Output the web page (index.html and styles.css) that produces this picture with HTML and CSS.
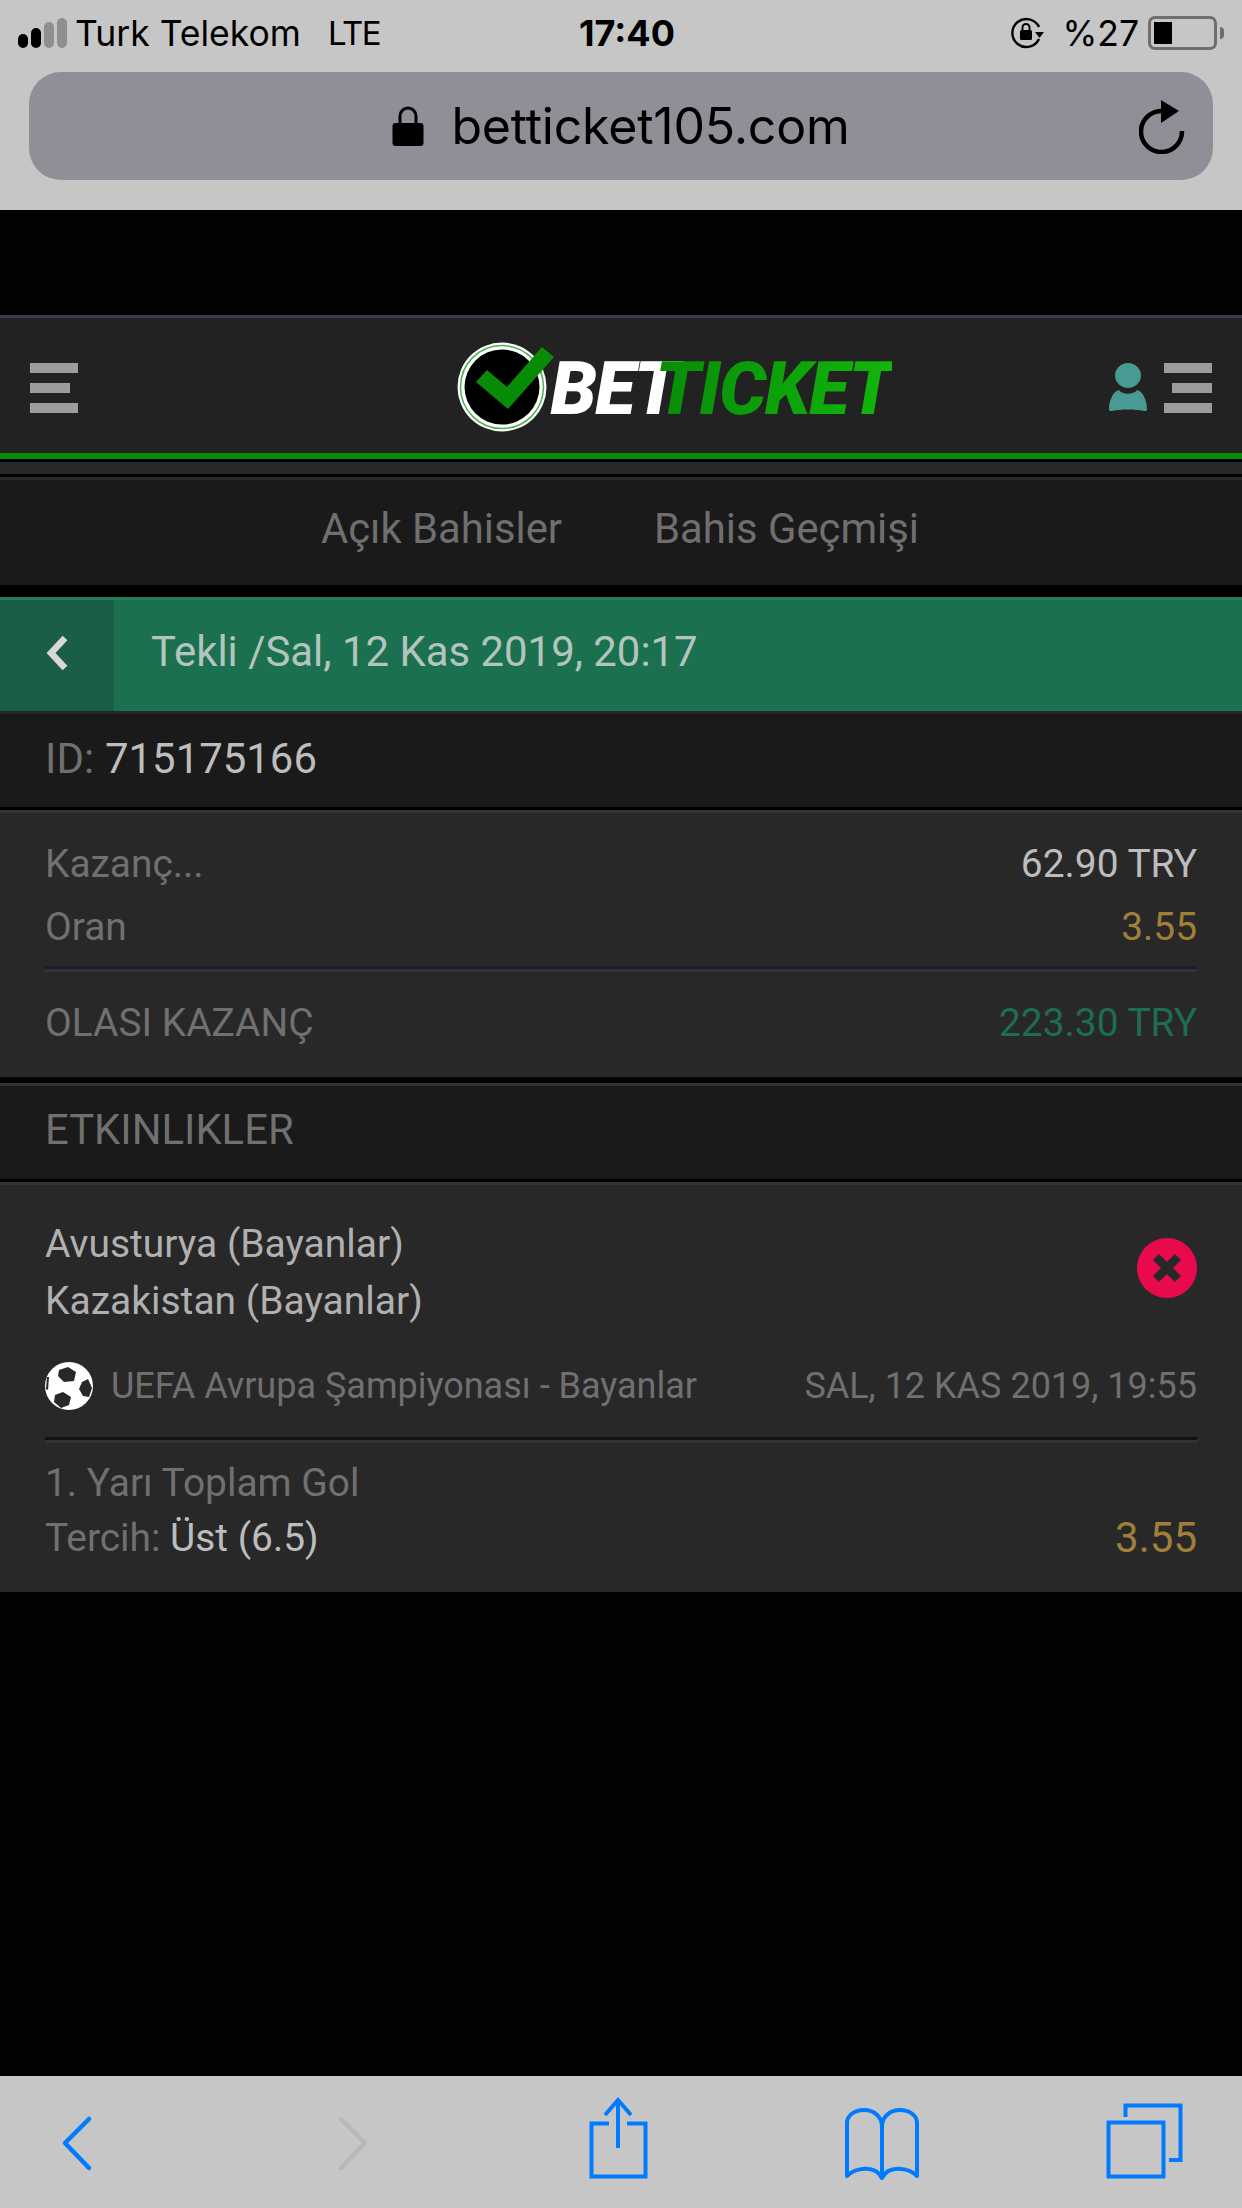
FILE: index.html
```html
<!DOCTYPE html>
<html lang="tr">
<head>
  <meta charset="utf-8">
  <title>Betticket</title>
  <link rel="stylesheet" href="styles.css">
</head>
<body>
  <div class="phone">
    <div class="browser-top">
      <div class="status">
        <div class="status-left">
          <span class="signal"><i class="on"></i><i class="on"></i><i></i><i></i></span>
          <span class="carrier">Turk Telekom</span>
          <span class="net">LTE</span>
        </div>
        <div class="clock">17:40</div>
        <div class="status-right">
          <svg class="rot" viewBox="0 0 36 32" width="36" height="32">
            <path d="M29 10A14 14 0 1 0 29 22" fill="none" stroke="#000" stroke-width="2.4"/>
            <path d="M25 15h9l-4.500 6z" fill="#000"/>
            <rect x="10" y="13" width="12" height="10" rx="1.500" fill="#000"/>
            <path d="M12.500 13v-2.500a3.500 3.500 0 0 1 7 0V13" fill="none" stroke="#000" stroke-width="2"/>
          </svg>
          <span class="percent">%27</span>
          <span class="battery"><i></i></span>
          <span class="battery-tip"></span>
        </div>
      </div>
      <div class="urlbar">
        <svg class="lock" viewBox="0 0 32 40" width="32" height="40">
          <rect x="0.500" y="17" width="31" height="23" rx="3" fill="#000"/>
          <path d="M8 18V10a8 8 0 0 1 16 0v8" fill="none" stroke="#000" stroke-width="3"/>
        </svg>
        <span class="url">betticket105.com</span>
        <svg class="reload" viewBox="0 0 46 54" width="46" height="54">
          <path d="M43 31A20.500 20.500 0 1 1 22 11" fill="none" stroke="#000" stroke-width="4.500"/>
          <path d="M22 0l18 11-18 12z" fill="#000"/>
        </svg>
      </div>
    </div>

    <div class="page">
      <div class="top-gap"></div>

      <header class="site-head">
        <div class="burger">
          <i></i><i class="short"></i><i></i>
        </div>
        <div class="logo">
          <svg class="logo-mark" viewBox="0 0 100 92" width="100" height="92">
            <circle cx="45" cy="46" r="44.500" fill="#fff"/>
            <circle cx="45" cy="46" r="41.500" fill="none" stroke="#4fb14f" stroke-width="1.500"/>
            <circle cx="45" cy="46" r="37.500" fill="#000"/>
            <path d="M19 41L30 29 50 46 85 6 97 16 51 68z" fill="#088c08"/>
          </svg>
          <span class="logo-text"><span class="logo-bet">BE<span class="logo-t">T</span></span><span class="logo-ticket">TICKET</span></span>
        </div>
        <div class="head-right">
          <svg class="user" viewBox="0 0 38 48" width="38" height="48">
            <ellipse cx="19" cy="12.500" rx="13" ry="12.500" fill="#4a9a94"/>
            <path d="M10 27c3 5 15 5 18 0 6 1 10 11 10 19 0 2-1 2-3 2-9-2-23-2-32 0-2 0-3 0-3-2 0-8 4-18 10-19z" fill="#4a9a94"/>
          </svg>
          <div class="burger burger-right">
            <i></i><i class="short"></i><i></i>
          </div>
        </div>
      </header>
      <div class="head-line"></div>
      <div class="head-strip"></div>

      <nav class="tabs">
        <a class="tab">Açık Bahisler</a>
        <a class="tab">Bahis Geçmişi</a>
      </nav>

      <div class="title-bar">
        <div class="back-box">
          <svg viewBox="0 0 24 38" width="24" height="38">
            <path d="M20 4L6 19l14 15" fill="none" stroke="#d8d8d8" stroke-width="6.500"/>
          </svg>
        </div>
        <div class="title-text">Tekli /Sal, 12 Kas 2019, 20:17</div>
      </div>

      <div class="id-row">
        <span class="id-label">ID:</span> <span class="id-value">715175166</span>
      </div>

      <section class="summary">
        <div class="line">
          <span class="muted">Kazanç...</span>
          <span class="light">62.90 TRY</span>
        </div>
        <div class="line line-odds">
          <span class="muted">Oran</span>
          <span class="gold">3.55</span>
        </div>
        <div class="line line-total">
          <span class="muted">OLASI KAZANÇ</span>
          <span class="green">223.30 TRY</span>
        </div>
      </section>

      <div class="events-head">ETKINLIKLER</div>

      <section class="event">
        <div class="teams-row">
          <div class="teams">
            <div>Avusturya (Bayanlar)</div>
            <div>Kazakistan (Bayanlar)</div>
          </div>
          <svg class="lost" viewBox="0 0 60 60" width="60" height="60">
            <circle cx="30" cy="30" r="30" fill="#e90a4e"/>
            <path d="M19 19l22 22M41 19L19 41" stroke="#282828" stroke-width="8.500"/>
          </svg>
        </div>
        <div class="league-row">
          <div class="league">
            <svg class="ball" viewBox="0 0 48 48" width="48" height="48">
              <circle cx="24" cy="24" r="24" fill="#fff"/>
              <path d="M14 8l9-3 8 5-2 9-10 1-6-6zM37 20l6-3 4 9-3 9-6-1-4-7zM10 33l8-3 8 5-2 8-8 3-7-6zM2 15l2 0-1 13-2-1z" fill="#282828"/>
            </svg>
            <span>UEFA Avrupa Şampiyonası - Bayanlar</span>
          </div>
          <div class="event-date">SAL, 12 KAS 2019, 19:55</div>
        </div>
        <div class="market">
          <div class="market-name">1. Yarı Toplam Gol</div>
          <div class="pick-row">
            <div><span class="muted">Tercih:</span> <span class="pick">Üst (6.5)</span></div>
            <span class="pick-odds">3.55</span>
          </div>
        </div>
      </section>
    </div>

    <div class="toolbar">
      <svg viewBox="0 0 100 132" width="100" height="132">
        <path d="M62 43L38 67l24 25" class="tool-line" stroke-linecap="round" stroke-linejoin="round"/>
      </svg>
      <svg viewBox="0 0 100 132" width="100" height="132">
        <path d="M47 43l24 24-24 25" class="tool-line off" stroke-linecap="round" stroke-linejoin="round"/>
      </svg>
      <svg viewBox="0 0 100 132" width="100" height="132">
        <path d="M48 47.500H30.500V100.500H84.500V47.500H66" class="tool-line thin"/>
        <path d="M57 72V24M44 39l13-15 13 15" class="tool-line thin"/>
      </svg>
      <svg viewBox="0 0 100 132" width="100" height="132">
        <path d="M54 102V50c0-8-7-16-18-16-9 0-17 5-17 13v53c8-8 28-12 35 2 7-14 27-10 35-2V47c0-8-8-13-17-13-11 0-18 8-18 16" class="tool-line thin" stroke-linejoin="round"/>
      </svg>
      <svg viewBox="0 0 100 132" width="100" height="132">
        <rect x="13.500" y="46.500" width="55" height="54" class="tool-line thin"/>
        <path d="M30.500 41V29.500H85.500V84H74" class="tool-line thin"/>
      </svg>
    </div>
  </div>
</body>
</html>
```
FILE: styles.css
```css
* {
  box-sizing: border-box;
}

html, body {
  margin: 0;
  padding: 0;
  background: #030203;
}

body {
  font-family: Roboto, "Noto Sans", sans-serif;
}

.phone {
  width: 1242px;
  height: 2208px;
  display: flex;
  flex-direction: column;
  overflow: hidden;
}

/* safari chrome */
.browser-top {
  height: 210px;
  background: #c6c6c6;
  color: #000;
  font-family: Inter, "Liberation Sans", sans-serif;
}

.status {
  height: 72px;
  padding: 0 18px 6px 18px;
  display: grid;
  grid-template-columns: 1fr auto 1fr;
  align-items: center;
  font-size: 35.5px;
}

.status-left {
  display: flex;
  align-items: center;
}

.signal {
  display: flex;
  align-items: flex-end;
  gap: 3px;
  height: 30px;
  margin-right: 8px;
}

.signal i {
  width: 10px;
  background: #8f8f8f;
  border-radius: 5px;
  height: 30px;
}

.signal i.on {
  background: #000;
}

.signal i:nth-child(1) {
  height: 14px;
}

.signal i:nth-child(2) {
  height: 20px;
}

.signal i:nth-child(3) {
  height: 26px;
}

.carrier {
  margin-right: 27px;
}

.net {
  font-size: 33px;
  letter-spacing: -1.5px;
}

.clock {
  font-size: 36px;
  font-weight: 700;
  margin-left: 12px;
}

.status-right {
  display: flex;
  align-items: center;
  justify-content: flex-end;
}

.percent {
  margin: 0 9px 0 16px;
}

.battery {
  width: 69px;
  height: 34px;
  border: 3px solid #6e6e6e;
  border-radius: 7px;
  padding: 3px;
}

.battery i {
  display: block;
  width: 18px;
  height: 22px;
  background: #000;
}

.battery-tip {
  width: 4px;
  height: 12px;
  margin-left: 3px;
  background: #6e6e6e;
  border-radius: 0 4px 4px 0;
}

.urlbar {
  position: relative;
  height: 108px;
  margin: 0 29px;
  background: #8f8f98;
  border-radius: 32px;
  display: flex;
  align-items: center;
  justify-content: center;
  gap: 27px;
}

.url {
  font-size: 50px;
  letter-spacing: -0.2px;
}

.reload {
  position: absolute;
  right: 28px;
  top: 28px;
}

.page {
  flex: 1;
  background: #030203;
}

.top-gap {
  height: 105px;
}

.site-head {
  height: 138px;
  border-top: 3px solid #383b4b;
  background: #222;
  padding: 45px 30px 0;
  display: flex;
  justify-content: space-between;
  align-items: flex-start;
}

.burger {
  width: 48px;
  display: flex;
  flex-direction: column;
  gap: 10px;
}

.burger i {
  display: block;
  height: 10px;
  background: #9c9c9c;
}

.burger i.short {
  width: 40px;
}

.burger-right {
  align-items: flex-end;
}

.burger-right i {
  width: 100%;
}

.head-right {
  display: flex;
  gap: 17px;
}

.logo {
  margin: -22px 0 0 162px;
  display: flex;
  align-items: center;
  height: 92px;
}

.logo-mark {
  position: relative;
  z-index: 1;
}

.logo-text {
  margin: 4px 0 0 -6px;
  font-size: 74px;
  font-weight: 900;
  font-style: italic;
  line-height: 1;
  letter-spacing: -1.5px;
}

.logo-bet {
  color: #fff;
}

/* last T of BET slides under the T of TICKET */
.logo-t {
  letter-spacing: -24px;
}

.logo-ticket {
  background: linear-gradient(90deg, #088c08, #11b60b);
  -webkit-background-clip: text;
  background-clip: text;
  color: transparent;
}

.head-line {
  height: 9px;
  background: #078c07;
  border-bottom: 3px solid #000;
}

.head-strip {
  height: 15px;
  background: #292929;
  border-bottom: 3px solid #000;
}

.tabs {
  height: 108px;
  border-top: 3px solid #2a2a2a;
  background: #1a1a1a;
  display: flex;
  justify-content: center;
  align-items: center;
  gap: 92px;
  font-size: 41.8px;
  color: #6f6f6f;
  padding: 0 2px 8px 0;
}

.title-bar {
  height: 114px;
  margin-top: 12px;
  background: #1b7050;
  border-top: 3px solid #2a7b5d;
  display: flex;
  align-items: center;
  color: #b4c4be;
  font-size: 41.9px;
}

.back-box {
  width: 114px;
  height: 100%;
  background: #1a5f45;
  display: flex;
  align-items: center;
  justify-content: center;
  padding-bottom: 6px;
}

.title-text {
  margin: 0 0 9px 37px;
}

.id-row {
  height: 99px;
  background: #1a1a1a;
  border-top: 3px solid #262626;
  border-bottom: 3px solid #000;
  padding: 0 45px 5px;
  display: flex;
  align-items: center;
  gap: 11px;
  font-size: 41.9px;
}

.id-label {
  color: #707070;
}

.id-value {
  color: #bdbdbd;
}

.summary {
  height: 273px;
  background: #282828;
  border-top: 3px solid #333;
  border-bottom: 6px solid #030203;
  padding: 23px 45px 0;
  font-size: 38.9px;
}

.line {
  height: 54px;
  display: flex;
  justify-content: space-between;
  align-items: center;
}

.line-odds {
  margin-top: 9px;
}

.line-total {
  margin-top: 13px;
  height: 110px;
  border-top: 3px solid #1a1c2e;
  box-shadow: inset 0 3px 0 #333;
}

.muted {
  color: #707070;
}

.light {
  color: #bdbdbd;
}

.gold {
  color: #a08038;
}

.green {
  color: #1c6e4e;
}

.events-head {
  height: 99px;
  background: #1a1a1a;
  border-top: 3px solid #333;
  border-bottom: 3px solid #000;
  padding: 0 45px 6px;
  display: flex;
  align-items: center;
  font-size: 41.8px;
  color: #707070;
}

.event {
  height: 410px;
  background: #282828;
  border-top: 3px solid #333;
  padding: 31px 45px 0;
}

.teams-row {
  display: flex;
  justify-content: space-between;
  align-items: center;
}

.teams {
  font-size: 39px;
  line-height: 57px;
  color: #b0b0b0;
}

.lost {
  margin-top: -10px;
}

.league-row {
  margin-top: 30px;
  height: 52px;
  display: flex;
  justify-content: space-between;
  align-items: center;
  font-size: 36px;
  color: #707070;
}

.league {
  display: flex;
  align-items: center;
  gap: 18px;
}

.market {
  margin-top: 25px;
  border-top: 3px solid #111;
  box-shadow: inset 0 3px 0 #333;
  padding-top: 18px;
  font-size: 38.9px;
}

.market-name {
  color: #707070;
  line-height: 50px;
}

.pick-row {
  display: flex;
  justify-content: space-between;
  align-items: center;
  line-height: 60px;
}

.pick {
  color: #bdbdbd;
}

.pick-odds {
  color: #a08038;
  font-size: 42px;
}

/* bottom safari bar */
.toolbar {
  height: 132px;
  background: #c6c6c6;
  padding: 0 47px 0 27px;
  display: flex;
  justify-content: space-between;
}

.tool-line {
  fill: none;
  stroke: #007aff;
  stroke-width: 4.500;
}

.tool-line.off {
  stroke: #b8b8b8;
}

.tool-line.thin {
  stroke-width: 4;
}
```
